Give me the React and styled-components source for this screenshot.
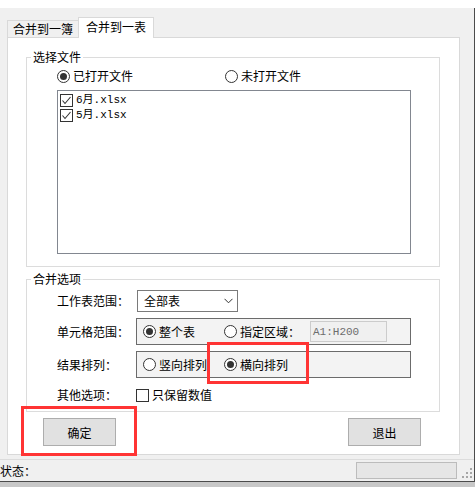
import React from 'react';
import styled, { createGlobalStyle } from 'styled-components';

const GlobalStyle = createGlobalStyle`
  html, body { margin: 0; padding: 0; }
  body {
    background: #fff;
    font-family: "Noto Sans CJK SC", "Noto Sans", sans-serif;
    font-size: 12px;
    color: #000;
  }
  #root { width: 475px; height: 487px; overflow: hidden; background: #c8c8c8; }
`;

const TopStrip = styled.div`
  height: 8px;
  background: #fff;
`;

const Window = styled.div`
  position: relative;
  box-sizing: border-box;
  width: 475px;
  height: 474px;
  background: #f0f0f0;
  border-right: 1px solid #4b4b4b;
  border-bottom: 1px solid #4b4b4b;
  display: flex;
  flex-direction: column;
`;

const TabStrip = styled.div`
  height: 29px;
  display: flex;
  align-items: flex-end;
  padding-left: 7px;
  flex: none;
`;

const Tab = styled.div`
  box-sizing: border-box;
  border: 1px solid #d9d9d9;
  border-bottom: none;
  display: flex;
  align-items: center;
  justify-content: center;
  line-height: 14px;
  width: ${p => (p.$active ? '76px' : '72px')};
  height: ${p => (p.$active ? '21px' : '17px')};
  background: ${p => (p.$active ? '#fff' : '#f0f0f0')};
  margin-left: ${p => (p.$active ? '-1px' : '0')};
  margin-bottom: ${p => (p.$active ? '-1px' : '0')};
  position: relative;
  z-index: ${p => (p.$active ? 1 : 0)};
  padding-bottom: ${p => (p.$active ? '2px' : '0')};
`;

const Panel = styled.div`
  box-sizing: border-box;
  margin-left: 7px;
  width: 453px;
  height: 418px;
  flex: none;
  background: #fff;
  border: 1px solid #d9d9d9;
  padding: 12px 19px 0 18px;
  display: flex;
  flex-direction: column;
`;

const GroupBox = styled.fieldset`
  margin: ${p => p.$mt || 0}px 0 0 0;
  padding: 0;
  border: 1px solid #dcdcdc;
  min-width: 0;
`;

const Legend = styled.legend`
  margin-left: 4px;
  padding: 0 2px;
  line-height: 14px;
  font-size: 12px;
`;

const GroupBody = styled.div`
  padding: ${p => p.$pad};
  display: flex;
  flex-direction: column;
`;

const RadioRow = styled.div`
  display: flex;
  align-items: center;
  height: 16px;
`;

const Option = styled.label`
  display: flex;
  align-items: center;
  gap: 3px;
  line-height: 14px;
  white-space: nowrap;
  flex: none;
  width: ${p => (p.$w ? `${p.$w}px` : 'auto')};
`;

const RadioCircle = styled.span`
  box-sizing: border-box;
  width: 13px;
  height: 13px;
  border-radius: 50%;
  border: 1px solid #333;
  background: #fff;
  display: grid;
  place-items: center;
  flex: none;
  &::after {
    content: '';
    width: 7px;
    height: 7px;
    border-radius: 50%;
    background: #333;
    display: ${p => (p.$checked ? 'block' : 'none')};
  }
`;

const Box = styled.span`
  box-sizing: border-box;
  width: 13px;
  height: 13px;
  border: 1px solid #333;
  background: #fff;
  display: grid;
  place-items: center;
  flex: none;
`;

const ListBox = styled.div`
  box-sizing: border-box;
  margin-top: 6px;
  width: 354px;
  height: 164px;
  border: 1px solid #828790;
  background: #fff;
  padding: 2px 0 0 2px;
`;

const ListItem = styled.div`
  display: flex;
  align-items: center;
  gap: 3px;
  height: 15px;
`;

const FileName = styled.span`
  font-family: "Liberation Mono", "Noto Sans CJK SC", monospace;
  font-size: 11px;
  line-height: 13px;
`;

const OptionsGrid = styled.div`
  display: grid;
  grid-template-columns: 79px 1fr;
  grid-template-rows: 22px 27px 27px 22px;
  row-gap: 6px;
  align-items: center;
`;

const FieldLabel = styled.span`
  line-height: 14px;
  white-space: nowrap;
`;

const Select = styled.div`
  box-sizing: border-box;
  margin-left: 1px;
  width: 101px;
  height: 22px;
  border: 1px solid #7a7a7a;
  background: #fff;
  display: flex;
  align-items: center;
  justify-content: space-between;
  padding: 0 4px 0 6px;
  line-height: 14px;
`;

const OptionBox = styled.div`
  box-sizing: border-box;
  width: 275px;
  height: 27px;
  border: 1px solid #6b6b6b;
  background: #f3f3f3;
  display: flex;
  align-items: center;
  padding-left: 6px;
`;

const RangeInput = styled.div`
  box-sizing: border-box;
  margin-left: 10px;
  width: 77px;
  height: 21px;
  border: 1px solid #cccccc;
  background: #f0f0f0;
  color: #6d6d6d;
  font-family: "Liberation Mono", monospace;
  font-size: 11px;
  display: flex;
  align-items: center;
  padding-left: 2px;
`;

const ButtonRow = styled.div`
  margin-top: 6px;
  display: flex;
  justify-content: space-between;
  padding: 0 19px 0 17px;
`;

const Button = styled.button`
  box-sizing: border-box;
  width: 73px;
  height: 28px;
  background: #e1e1e1;
  border: 1px solid #adadad;
  font-family: inherit;
  font-size: 12px;
  color: #000;
  padding: 0;
`;

const StatusBar = styled.div`
  box-sizing: border-box;
  margin-top: 4px;
  height: 22px;
  border-top: 1px solid #dcdcdc;
  display: flex;
  align-items: center;
  flex: none;
`;

const StatusText = styled.span`
  line-height: 14px;
`;

const StatusPane = styled.div`
  box-sizing: border-box;
  margin-left: auto;
  width: 101px;
  height: 17px;
  background: #e6e6e6;
  border: 1px solid #bcbcbc;
`;

const Grip = styled.svg`
  flex: none;
  align-self: flex-end;
  margin: 0 1px 3px 5px;
`;

const Highlight = styled.div`
  position: absolute;
  box-sizing: border-box;
  border: 3px solid #ff3434;
  pointer-events: none;
`;

const Check = () => (
  <svg width="11" height="11" viewBox="0 0 11 11">
    <polyline points="1.5,5.5 4,8.5 9.5,2" fill="none" stroke="#333" strokeWidth="1.1" />
  </svg>
);

const Chevron = () => (
  <svg width="9" height="6" viewBox="0 0 9 6">
    <polyline points="0.5,0.8 4.5,4.8 8.5,0.8" fill="none" stroke="#333" strokeWidth="1" />
  </svg>
);

const Radio = ({ checked, children, w }) => (
  <Option $w={w}>
    <RadioCircle $checked={checked} />
    <span>{children}</span>
  </Option>
);

export default function App() {
  return (
    <>
      <GlobalStyle />
      <TopStrip />
      <Window>
        <TabStrip>
          <Tab>合并到一簿</Tab>
          <Tab $active>合并到一表</Tab>
        </TabStrip>
        <Panel>
          <GroupBox>
            <Legend>选择文件</Legend>
            <GroupBody $pad="4px 0 12px 30px">
              <RadioRow>
                <Radio checked w={168}>已打开文件</Radio>
                <Radio>未打开文件</Radio>
              </RadioRow>
              <ListBox>
                {['6月.xlsx', '5月.xlsx'].map(f => (
                  <ListItem key={f}>
                    <Box><Check /></Box>
                    <FileName>{f}</FileName>
                  </ListItem>
                ))}
              </ListBox>
            </GroupBody>
          </GroupBox>
          <GroupBox $mt={5}>
            <Legend>合并选项</Legend>
            <GroupBody $pad="4px 0 5px 30px">
              <OptionsGrid>
                <FieldLabel>工作表范围：</FieldLabel>
                <Select>
                  <span>全部表</span>
                  <Chevron />
                </Select>
                <FieldLabel>单元格范围：</FieldLabel>
                <OptionBox>
                  <Radio checked w={81}>整个表</Radio>
                  <Radio>指定区域：</Radio>
                  <RangeInput>A1:H200</RangeInput>
                </OptionBox>
                <FieldLabel>结果排列：</FieldLabel>
                <OptionBox>
                  <Radio w={81}>竖向排列</Radio>
                  <Radio checked>横向排列</Radio>
                </OptionBox>
                <FieldLabel>其他选项：</FieldLabel>
                <Option>
                  <Box />
                  <span>只保留数值</span>
                </Option>
              </OptionsGrid>
            </GroupBody>
          </GroupBox>
          <ButtonRow>
            <Button>确定</Button>
            <Button>退出</Button>
          </ButtonRow>
        </Panel>
        <StatusBar>
          <StatusText>状态：</StatusText>
          <StatusPane />
          <Grip width="11" height="10" viewBox="0 0 11 10">
            <g fill="#a6a6a6">
              <rect x="8" y="0" width="2" height="2" />
              <rect x="4" y="4" width="2" height="2" />
              <rect x="8" y="4" width="2" height="2" />
              <rect x="0" y="8" width="2" height="2" />
              <rect x="4" y="8" width="2" height="2" />
              <rect x="8" y="8" width="2" height="2" />
            </g>
          </Grip>
        </StatusBar>
        <Highlight style={{ left: 207, top: 334, width: 102, height: 42 }} />
        <Highlight style={{ left: 21, top: 398, width: 116, height: 50 }} />
      </Window>
    </>
  );
}
